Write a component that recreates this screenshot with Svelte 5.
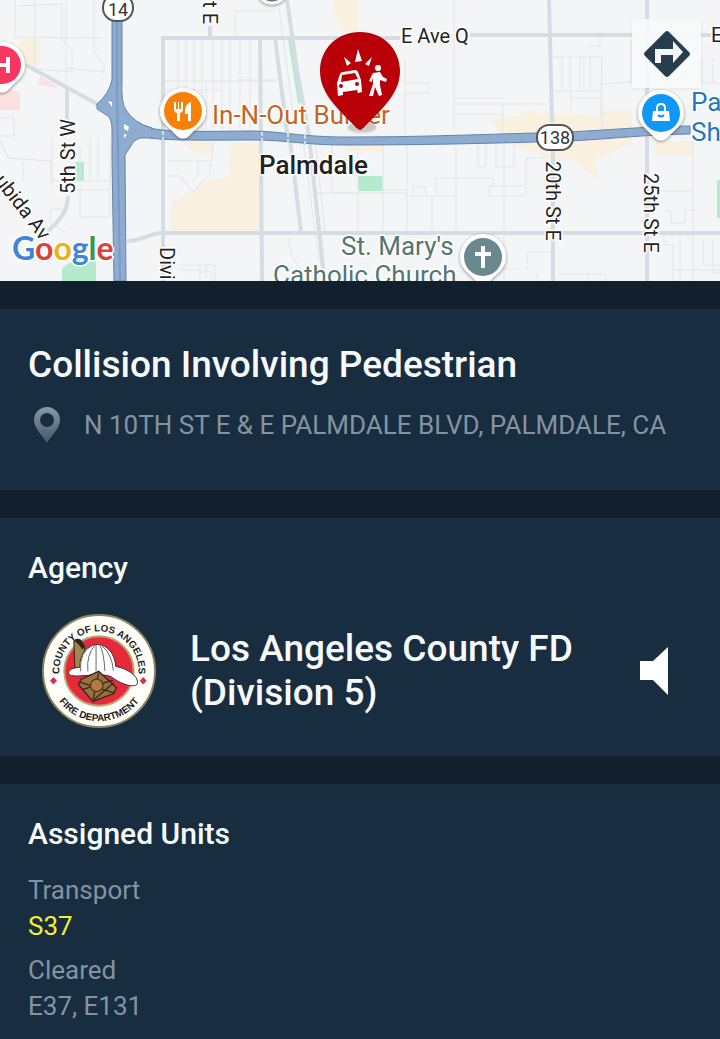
<script lang="ts">
  interface UnitGroup {
    status: string;
    units: string;
    active?: boolean;
  }

  const incident = {
    type: "Collision Involving Pedestrian",
    address: "N 10TH ST E & E PALMDALE BLVD, PALMDALE, CA"
  };

  const agency = "Los Angeles County FD (Division 5)";

  const unitGroups: UnitGroup[] = [
    { status: "Transport", units: "S37", active: true },
    { status: "Cleared", units: "E37, E131" }
  ];

  // white teardrop with a coloured disc, drawn around its own centre
  const poiPin = "M0-23a23 23 0 0 1 23 23c0 12-9 16-15 23q-8 9-16 0c-6-7-15-11-15-23a23 23 0 0 1 23-23z";

  const streets = [
    "M163 281V38h237M470 35h242",
    "M67 120V88M68 196c0 16-10 26-20 35",
    "M26 65l73 40",
    "M210 26v12M260 38l2 243",
    "M127 241c16 0 20-7 34-8h559",
    "M275 38l12 94M290 140l11 92M287 0l10 70 12 66 16 150",
    "M549 0l3 122M553 150v131M647 0v281"
  ];

  const lanes = [
    "M15 0v37l87 1M18 6l44-2v35l10 11v22l-37-3V0M94 0v52l10 12v8l-38-4M66 5v83",
    "M0 118h14v18H0M52 137v50M0 140l8 18 43 3v20h60M23 161v20M110 140v77H80v-70M90 141v40M98 141v40M70 190h40M50 209h18M50 209v14l15 9",
    "M163 81h112M165 90h45M178 38v93M186 38v93M194 38v93M202 38v93M213 38v93M222 38v93M230 38v93M240 38v93M250 38v93",
    "M237 80h40M235 38V11h41M279 8l15 112M206 81v50M222 90h-8",
    "M168 161h44V142M168 176h13l12 16 17-18v-12M198 161v14l-6 7M180 178l5 4",
    "M180 265h35v18M180 270h28M206 265v13M200 265v18M200 272h12v9",
    "M303 140l13 100 8 41M315 140l10 92M289 238c1 20 8 25 12 31v12",
    "M332 145v48h26M332 162v-22M358 148v84M383 143v90M407 143v90M315 193h92M383 190h24M430 196h-23M413 196v-9h13v9M432 195v37",
    "M405 60v75M405 83h24v10h-24M454 0v130M454 98h50M455 104h93M455 114h48M503 104v30",
    "M552 57h50l-1 60M562 57v32M570 57v32M580 57v32M584 57v32M590 57v32M552 91h50M571 98h31v34M588 46h12V37M571 91v20M602 84l30-2M631 40v42",
    "M456 143v90M478 143v24h8v-24M496 143v24h18v-24M504 143v138M526 158v38M526 158h20M436 196v-18h57v8l-4 2v8h36M489 186h36",
    "M430 196h25M490 235v22l14 12h15M527 270v-18h24M537 273v8M558 274h48v7M588 274v7M662 191h30M665 211h6v12h14v-13h10",
    "M664 232v13h9v36M680 233v48M693 140v141M673 270h47M703 240v25h17M713 240v33h7M702 58v25h18M713 58v25"
  ];
</script>

<main class="incident">
  <div class="map">
    <svg viewBox="0 0 720 281" role="img" aria-label="Map of Palmdale">
      <defs>
        <filter id="shade" x="-30%" y="-30%" width="160%" height="160%">
          <feDropShadow dx="0" dy="1" stdDeviation="1.5" flood-color="#333" flood-opacity="0.6" />
        </filter>
      </defs>
      <rect width="720" height="281" fill="#f4f5f6" />

      <g fill="#f9f0e0">
        <path d="M20 39h20v26H20zM334 0h23v32h-14l-8-16zM171 202l24-12 8-8 25-5 4-34h29v90h-90z" />
        <path d="M182 142h32v12l-20-2zM490 120l30-4 10-7 10 5h40l15 3 10-6h27v34h-5l-22 12-10 2 3 20-15-10-10-10h-20l-25-9-18-6zM655 141h38v15h-38zM345 141h38v10h-38z" />
      </g>
      <path d="M0 86l20 6v18H0zM40 76l20 12-22-3z" fill="#fde0e0" />
      <path d="M76 162h8v19h-8zM62 268l15-10h19v23H62zM288 39h5l11 62-6 3zM358 176h25v15h-25zM717 180h3v38h-3z" fill="#b4ebcc" />

      <g fill="none" stroke="#e2e5e9" stroke-width="1">
        {#each lanes as lane}
          <path d={lane} />
        {/each}
      </g>
      <g fill="none" stroke="#d5dde3" stroke-width="4">
        {#each streets as street}
          <path d={street} />
        {/each}
      </g>

      <g fill="#8eabd0" stroke="#6483ae" stroke-width="1" stroke-linejoin="round">
        <path d="M150 128c20 5 70 3 105 3 30 1 50 6 90 6 70 0 120-2 190-4 60-1 90-6 155-7v8c-60 1-90 7-155 8-70 2-130 3-190 3-40 0-60-5-90-5-35 0-85 1-105-2z" />
        <path d="M112 0v80q-3 14-15 24v5l11 7q4 4 4 14v30l2 121h12l-1-126 9-14 6-3 12 0V128q-18-5-26-18-5-6-4-30V0z" />
      </g>
      <path d="M139 128l18 3v6l-18 0z" fill="#8eabd0" />
      <path d="M117 20v70l3 191" fill="none" stroke="#7d9ac2" stroke-width="2" />
      <path d="M108 101l4 1v5zM124 124l5 3-1 4-4-2zM124 134l3 1-3 3z" fill="#fff" />
      <path d="M163 131v10M262 132v11M288 133v11M305 135v11" stroke="#d5dde3" stroke-width="2" stroke-dasharray="4 2" />

      <g class="street">
        <text x="401" y="43">E Ave Q</text>
        <text x="711" y="42">E</text>
        <text transform="translate(75 194) rotate(-90)">5th St W</text>
        <text transform="translate(160 247) rotate(90)">Divi</text>
        <text transform="translate(203 24) rotate(90)" text-anchor="end">t E</text>
        <text transform="translate(546 161) rotate(90)">20th St E</text>
        <text transform="translate(644 173) rotate(90)">25th St E</text>
        <text transform="translate(-6 181) rotate(52)">ubida Av</text>
      </g>

      <g fill="#fff" stroke="#555" stroke-width="2">
        <rect x="103" y="-6" width="30" height="27" rx="13" />
        <rect x="537" y="125" width="36" height="25" rx="12" />
      </g>
      <g class="shield">
        <text x="118" y="16">14</text>
        <text x="555" y="144">138</text>
      </g>

      <g class="place">
        <text x="212" y="124" fill="#c4661f">In-N-Out Burger</text>
        <text x="341" y="255" fill="#56756f">St. Mary's</text>
        <text x="273" y="284" fill="#56756f">Catholic Church</text>
        <text x="691" y="111" fill="#2478bd">Pa</text>
        <text x="691" y="141" fill="#2478bd">Sh</text>
        <text class="city" x="259" y="174">Palmdale</text>
      </g>

      <circle cx="272" cy="-12" r="15" fill="#707579" stroke="#fff" stroke-width="3" filter="url(#shade)" />

      <g transform="translate(2 65)">
        <path d={poiPin} fill="#fff" filter="url(#shade)" />
        <circle r="19" fill="#fa3560" />
        <path d="M-6-8v16M6-8v16M-6 0h12" stroke="#fff" stroke-width="4" />
      </g>
      <g transform="translate(183 111)">
        <path d={poiPin} fill="#fff" filter="url(#shade)" />
        <circle r="19" fill="#f98006" />
        <path d="M-9-9v7q0 3 3 4v8h3V2q3-1 3-4v-7h-2v7h-2v-7h-1v7h-2v-7zM8-9q-5 1-6 8v4h3v7h3z" fill="#fff" />
      </g>
      <g transform="translate(661 113)">
        <path d={poiPin} fill="#fff" filter="url(#shade)" />
        <circle r="19" fill="#1197f5" />
        <path d="M-8-2h16l1 10H-9z" fill="#fff" />
        <path d="M-4-2v-3q0-4 4-4t4 4v3" fill="none" stroke="#fff" stroke-width="2" />
        <path d="M-3 2q3 3 6 0" fill="none" stroke="#1197f5" stroke-width="2" />
      </g>
      <g transform="translate(483 257)">
        <path d={poiPin} fill="#fff" filter="url(#shade)" />
        <circle r="19" fill="#69898f" />
        <path d="M-2-11h4v6h6v4H2v12h-4V-1h-6v-4h6z" fill="#fff" />
      </g>

      <!-- incident marker -->
      <ellipse cx="362" cy="127" rx="14" ry="5" fill="#777" opacity="0.35" filter="url(#shade)" />
      <path d="M360 32c23 0 40 17 40 39 0 21-15 36-38 58q-2 2-4 0c-23-22-38-37-38-58 0-22 17-39 40-39z" fill="#b90008" />
      <g fill="#fff">
        <path d="M358 49l4 12-7 1zM344 57l7 6-4 3zM372 57l-3 9-4-2z" />
        <path d="M340 74q1-2 3-2l12-2q2 0 3 2l3 8 1 12-4 1-1-3-14 2v3l-5 1-1-13z" />
        <path d="M342 75l13-2 3 6-17 3z" fill="#b90008" />
        <g fill="#b90008"><circle cx="341" cy="86" r="2" /><circle cx="357" cy="84" r="2" /></g>
        <circle cx="378" cy="68" r="3" />
        <path d="M373 73l7-1 3 5 4 2-1 3-6-2v5l2 10-3 1-4-9-2 9h-4l4-12v-7l-1 5-3-1z" />
      </g>

      <text class="google" x="12" y="260">
        <tspan fill="#4285d8">G</tspan><tspan fill="#d9433b">o</tspan><tspan fill="#e9b21c">o</tspan><tspan fill="#4285d8">g</tspan><tspan fill="#35964f">l</tspan><tspan fill="#d9433b">e</tspan>
      </text>
    </svg>
    <button type="button" class="directions" aria-label="Directions">
      <svg viewBox="0 0 48 48" aria-hidden="true">
        <path d="M22 2q2-2 4 0l20 20q2 2 0 4L26 46q-2 2-4 0L2 26q-2-2 0-4z" fill="#263d4e" />
        <path d="M12 33V19h18v-8l10 11-10 11v-8H18v8z" fill="#f3f5f7" />
      </svg>
    </button>
  </div>

  <section class="panel summary">
    <h1>{incident.type}</h1>
    <p class="address">
      <svg viewBox="0 0 26 36" aria-hidden="true">
        <defs>
          <linearGradient id="pinFade" x1="0" y1="0" x2="0" y2="1">
            <stop offset="0" stop-color="#8b99a5" />
            <stop offset="1" stop-color="#40566a" />
          </linearGradient>
        </defs>
        <path fill="url(#pinFade)" fill-rule="evenodd" d="M13 0a13 13 0 0 1 13 13c0 8-8 15-13 23C8 28 0 21 0 13A13 13 0 0 1 13 0zm0 6a7 7 0 1 0 0 14 7 7 0 0 0 0-14z" />
      </svg>
      <span>{incident.address}</span>
    </p>
  </section>

  <section class="panel agency">
    <h2>Agency</h2>
    <div class="agency-row">
      <svg class="seal" viewBox="0 0 348 348" role="img" aria-label="County of Los Angeles Fire Department">
        <defs>
          <path id="sealTop" d="M53 184v-10a121 121 0 0 1 242 0v10" />
          <path id="sealBottom" d="M21 174a153 153 0 0 0 306 0" />
        </defs>
        <circle cx="174" cy="174" r="171" fill="#fffef8" stroke="#8d8464" stroke-width="6" />
        <circle cx="174" cy="174" r="106" fill="#e8293c" stroke="#b9a575" stroke-width="6" />
        <g class="seal-text">
          <text><textPath href="#sealTop" startOffset="50%">COUNTY OF LOS ANGELES</textPath></text>
          <text><textPath href="#sealBottom" startOffset="50%">FIRE DEPARTMENT</textPath></text>
        </g>
        <path d="M35 194l9 10-9 10-9-10zM309 194l9 10-9 10-9-10z" fill="#cf3350" stroke="#cf3350" stroke-width="3" />
        <path d="M97 82q10-10 22-2l12 20-14 82-16-5z" fill="#a4854b" stroke="#30251b" stroke-width="3" />
        <path d="M97 82q10-10 22-2l12 20-9 8q-10-18-25-26z" fill="#30251b" />
        <path d="M81 180c0-10 14-16 34-17 0-44 24-70 54-70 33 0 54 32 56 67 34 6 67 27 67 50-3 19-48 7-80-18-30-15-98 2-122-4q-9-2-9-8z" fill="#fff" stroke="#3c302b" stroke-width="3" />
        <path d="M118 175q-5-60 36-79M140 175q-5-50 22-80M165 175V94M192 174q-3-58-16-79M218 173q-5-53-35-75" fill="none" stroke="#6c6460" stroke-width="3" />
        <path d="M173 175l54 50-8 18-64 24-44-52 8-15z" fill="#98713f" stroke="#34271b" stroke-width="4" />
        <path d="M113 207l106 34M219 210l-64 55M173 180l-17 80M125 230l92-28" stroke="#34271b" stroke-width="4" />
        <circle cx="167" cy="218" r="19" fill="#b17c42" stroke="#5c3425" stroke-width="4" />
      </svg>
      <p class="agency-name">{agency}</p>
      <button type="button" class="listen" aria-label="Listen">
        <svg viewBox="0 0 28 48" aria-hidden="true"><path d="M0 14h13L28 0v48L13 33H0z" /></svg>
      </button>
    </div>
  </section>

  <section class="panel units">
    <h2>Assigned Units</h2>
    <dl>
      {#each unitGroups as group}
        <div class="unit-group">
          <dt>{group.status}</dt>
          <dd class:active={group.active}>{group.units}</dd>
        </div>
      {/each}
    </dl>
  </section>
</main>

<style>
  :global(body) {
    margin: 0;
    background: #182d40;
  }

  .incident {
    display: flex;
    flex-direction: column;
    gap: 28px;
    background: #12202e;
    color: #f7fafc;
    font-family: Roboto, "Liberation Sans", sans-serif;
  }

  h1, h2, p, dl, dd {
    margin: 0;
  }

  .map {
    position: relative;
    overflow: hidden;
  }

  .map > svg {
    display: block;
    width: 100%;
    height: auto;
  }

  .map text {
    paint-order: stroke;
    stroke: #fff;
    stroke-width: 3px;
    stroke-linejoin: round;
  }

  .street {
    font-size: 20px;
    fill: #242424;
  }

  .map .shield text {
    font-size: 18px;
    text-anchor: middle;
    fill: #333;
    stroke: none;
  }

  .place {
    font-size: 26px;
  }

  .city {
    font-weight: 500;
    fill: #222;
  }

  .google {
    font-family: Lato, sans-serif;
    font-size: 32px;
    font-weight: 700;
  }

  .directions {
    position: absolute;
    top: 19px;
    right: 19px;
    display: grid;
    place-items: center;
    width: 69px;
    height: 69px;
    padding: 0;
    border: none;
    background: rgba(248, 249, 250, 0.9);
    box-shadow: 0 1px 4px rgba(0, 0, 0, 0.06);
    cursor: pointer;
  }

  .directions svg {
    width: 48px;
    height: 48px;
  }

  .panel {
    padding: 32px 28px 28px;
    background: #182d40;
  }

  h1 {
    font-size: 37px;
    font-weight: 500;
    line-height: 48px;
  }

  h2 {
    font-size: 30px;
    font-weight: 500;
    line-height: 36px;
  }

  .address {
    display: flex;
    align-items: center;
    gap: 24px;
    margin-top: 16px;
    padding: 0 0 17px 6px;
    color: #8493a2;
    font-size: 26px;
    line-height: 40px;
  }

  .address svg {
    flex: none;
    width: 26px;
    height: 36px;
  }

  .agency-row {
    display: flex;
    align-items: center;
    margin-top: 28px;
    padding: 0 24px 0 12px;
  }

  .seal {
    flex: none;
    width: 118px;
    height: 114px;
  }

  .seal-text {
    font-family: "Liberation Sans", sans-serif;
    font-size: 30px;
    font-weight: 700;
    text-anchor: middle;
    fill: #1e1e1e;
  }

  .agency-name {
    flex: 1;
    padding: 0 32px;
    font-size: 37px;
    font-weight: 500;
    line-height: 44px;
  }

  .listen {
    flex: none;
    padding: 0;
    border: none;
    background: none;
    cursor: pointer;
  }

  .listen svg {
    display: block;
    width: 28px;
    height: 48px;
    fill: #fff;
  }

  .units dl {
    margin-top: 20px;
    color: #8493a2;
    font-size: 26px;
    line-height: 36px;
  }

  .unit-group {
    margin-bottom: 8px;
  }

  .active {
    color: #f4ee38;
  }
</style>
